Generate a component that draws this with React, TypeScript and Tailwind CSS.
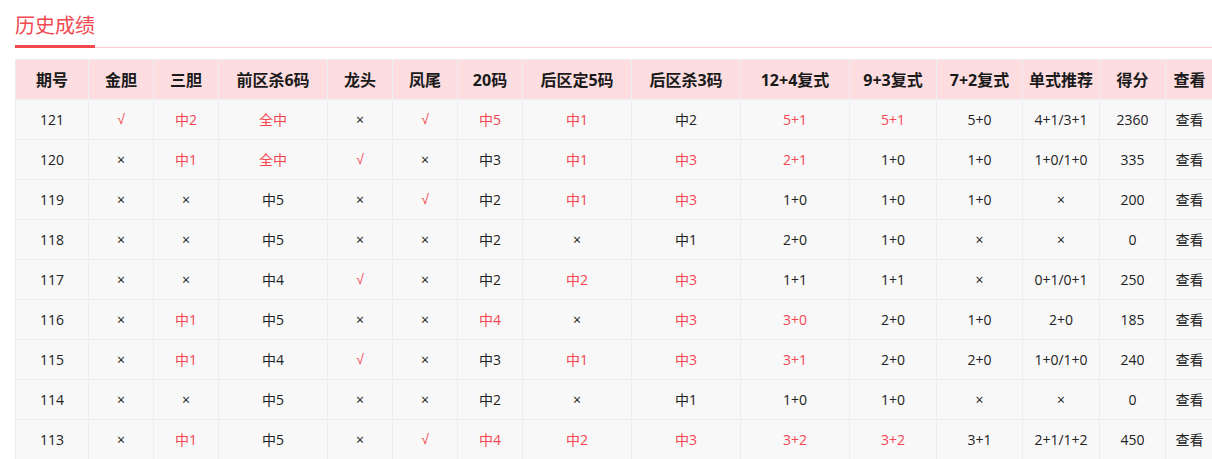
import React from "react";

type Cell = string;
const R = "r:";

const headers = ["期号", "金胆", "三胆", "前区杀6码", "龙头", "凤尾", "20码", "后区定5码", "后区杀3码", "12+4复式", "9+3复式", "7+2复式", "单式推荐", "得分", "查看"];
const widths = [73, 65, 65, 109, 65, 65, 65, 109, 109, 109, 87, 86, 77, 66, 48];

const rows: Cell[][] = [
  ["121", "r:√", "r:中2", "r:全中", "×", "r:√", "r:中5", "r:中1", "中2", "r:5+1", "r:5+1", "5+0", "4+1/3+1", "2360", "查看"],
  ["120", "×", "r:中1", "r:全中", "r:√", "×", "中3", "r:中1", "r:中3", "r:2+1", "1+0", "1+0", "1+0/1+0", "335", "查看"],
  ["119", "×", "×", "中5", "×", "r:√", "中2", "r:中1", "r:中3", "1+0", "1+0", "1+0", "×", "200", "查看"],
  ["118", "×", "×", "中5", "×", "×", "中2", "×", "中1", "2+0", "1+0", "×", "×", "0", "查看"],
  ["117", "×", "×", "中4", "r:√", "×", "中2", "r:中2", "r:中3", "1+1", "1+1", "×", "0+1/0+1", "250", "查看"],
  ["116", "×", "r:中1", "中5", "×", "×", "r:中4", "×", "r:中3", "r:3+0", "2+0", "1+0", "2+0", "185", "查看"],
  ["115", "×", "r:中1", "中4", "r:√", "×", "中3", "r:中1", "r:中3", "r:3+1", "2+0", "2+0", "1+0/1+0", "240", "查看"],
  ["114", "×", "×", "中5", "×", "×", "中2", "×", "中1", "1+0", "1+0", "×", "×", "0", "查看"],
  ["113", "×", "r:中1", "中5", "×", "r:√", "r:中4", "r:中2", "r:中3", "r:3+2", "r:3+2", "3+1", "2+1/1+2", "450", "查看"],
];

export default function App() {
  return (
    <div
      className="w-[1212px] h-[459px] overflow-hidden bg-white pl-[15px]"
      style={{ fontFamily: '"Open Sans", "Noto Sans CJK SC", sans-serif' }}
    >
      <div className="pt-[10px] border-b border-[#fbcdd0]">
        <div className="w-[80px] -mb-px border-b-[3px] border-[#f2474f] pb-[5px] text-[20px] leading-[30px] text-[#f2474f]" style={{ fontFamily: '"Noto Sans CJK SC", sans-serif' }}>
          历史成绩
        </div>
      </div>
      <table className="mt-[11px] table-fixed border-collapse w-[1198px]">
        <colgroup>
          {widths.map((w, i) => (
            <col key={i} style={{ width: w }} />
          ))}
        </colgroup>
        <thead>
          <tr className="bg-[#fddde0] h-[40px]">
            {headers.map((h, i) => (
              <th
                key={i}
                className="border border-[#eceef4] text-[16px] font-bold text-[#1a1a1a] text-center p-0 whitespace-nowrap"
              >
                {h}
              </th>
            ))}
          </tr>
        </thead>
        <tbody>
          {rows.map((row, ri) => (
            <tr key={ri} className="bg-[#f8f8f9] h-[40px]">
              {row.map((c, ci) => {
                const red = c.startsWith(R);
                const txt = red ? c.slice(2) : c;
                const isCheck = txt === "√";
                return (
                  <td
                    key={ci}
                    className={
                      "border border-[#eceef4] text-center p-0 whitespace-nowrap text-[14px] " +
                      (red ? "text-[#f5454f]" : "text-[#222]")
                    }
                    style={isCheck ? { fontFamily: '"Liberation Sans", sans-serif' } : undefined}
                  >
                    {txt}
                  </td>
                );
              })}
            </tr>
          ))}
        </tbody>
      </table>
    </div>
  );
}
